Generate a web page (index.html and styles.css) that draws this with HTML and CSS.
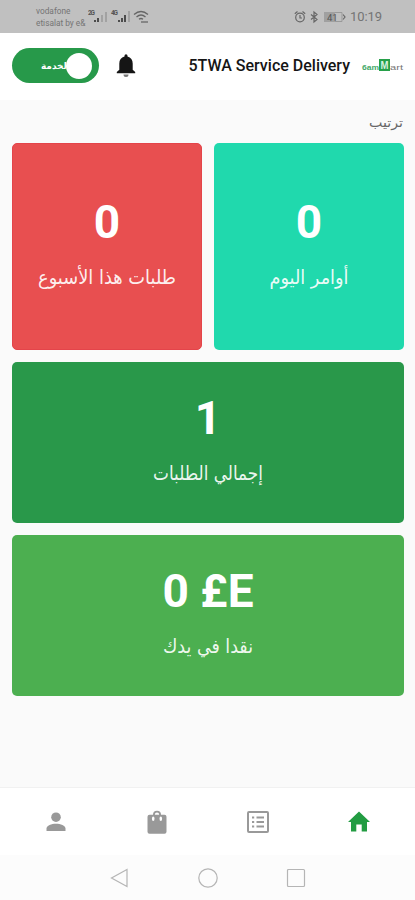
FILE: index.html
```html
<!DOCTYPE html>
<html lang="ar">
<head>
<meta charset="utf-8">
<title>5TWA Service Delivery</title>
<link rel="stylesheet" href="styles.css">
</head>
<body>
<div class="screen">
  <div class="status">
    <div class="carriers"><span>vodafone</span><span>etisalat by e&amp;</span></div>
    <svg class="signals" width="64" height="16" viewBox="0 0 64 16">
      <g font-family="Roboto, sans-serif" font-size="6.5" font-weight="700" fill="#555"><text x="0" y="6" textLength="7">2G</text><text x="23" y="6" textLength="7">4G</text></g>
      <g fill="#4c4c4c"><path d="M6 11h2v2H6zM9 9h2v4H9zM30 11h2v2h-2zM33 9h2v4h-2zM36 6h2v7h-2z"/></g>
      <g fill="#a2a2a2"><path d="M13 6h2v7h-2zM17 3h2v10h-2zM40 2h2v11h-2z"/></g>
      <g fill="none" stroke="#666" stroke-width="1.3"><path d="M46 5.500q7-6 14 0M48.500 8q4.500-4 9 0M51 10.300q2-1.600 4 0"/><path d="M53 13h7"/></g>
    </svg>
    <svg class="state" width="52" height="14" viewBox="0 0 52 14">
      <g fill="none" stroke="#666" stroke-width="1.200"><circle cx="6" cy="7.500" r="4.300"/><path d="M6 5v3h2M.8 3.700L3.500 1.500M11.200 3.700L8.500 1.500M17 4.500l6 5-3 2.500V2l3 2.500-6 5"/><path d="M49 4.500l2 2.500-2 2.500"/></g>
      <rect x="30" y="2" width="11" height="10" fill="#a0a0a0"/><path d="M41 2.500h7v9h-7" fill="none" stroke="#999"/>
      <text x="33" y="10.500" font-family="Roboto, sans-serif" font-size="9.500" fill="#555">41</text>
    </svg>
    <span class="clock">10:19</span>
  </div>
  <header class="appbar">
    <div class="toggle"><span class="toggle-text" dir="rtl">لخدمة</span><span class="knob"></span></div>
    <svg class="bell" width="20" height="24" viewBox="0 0 20 24"><path fill="#151515" d="M8.500 2.500V1.700a1.500 1.500 0 0 1 3 0v.8c3.400.8 5.200 3.500 5.200 7v6.300l2.500 2.300v1.100H.8v-1.100l2.500-2.300V9.500c0-3.500 1.800-6.200 5.200-7z"/><path fill="#777" d="M7.500 20.500h5a2.500 2.500 0 0 1-5 0z"/></svg>
    <h1>5TWA Service Delivery</h1>
    <svg class="logo" width="43" height="16" viewBox="0 0 43 16"><rect x="18" y="1" width="11" height="12" fill="#27a04a"/><g font-family="Liberation Sans, sans-serif" font-weight="700"><text x="1" y="12" font-size="7.500" textLength="17" lengthAdjust="spacingAndGlyphs" fill="#45a969">6am</text><text x="19.500" y="11" font-size="10" textLength="8" lengthAdjust="spacingAndGlyphs" fill="#d9f2e0">M</text><text x="29" y="12" font-size="7.500" textLength="13" lengthAdjust="spacingAndGlyphs" fill="#777" font-weight="400">art</text></g></svg>
  </header>
  <main>
    <svg class="sort" width="36" height="31" viewBox="0 0 36 31"><text x="18" y="15" textLength="34" lengthAdjust="spacingAndGlyphs">ترتيب</text></svg>
    <div class="cards">
      <section class="card red"><strong>0</strong><svg width="170" height="40" viewBox="0 0 170 40"><text x="85" y="25" textLength="138" lengthAdjust="spacingAndGlyphs">طلبات هذا الأسبوع</text></svg></section>
      <section class="card teal"><strong>0</strong><svg width="170" height="40" viewBox="0 0 170 40"><text x="85" y="25" textLength="79" lengthAdjust="spacingAndGlyphs">أوامر اليوم</text></svg></section>
      <section class="card wide green"><strong>1</strong><svg width="170" height="40" viewBox="0 0 170 40"><text x="85" y="25" textLength="110" lengthAdjust="spacingAndGlyphs">إجمالي الطلبات</text></svg></section>
      <section class="card wide light"><strong>0 £E</strong><svg width="170" height="40" viewBox="0 0 170 40"><text x="85" y="25" textLength="90" lengthAdjust="spacingAndGlyphs">نقدا في يدك</text></svg></section>
    </div>
  </main>
  <nav class="tabs">
    <svg viewBox="0 0 24 24"><circle cx="12" cy="7.200" r="4.800"/><path d="M2.500 21v-2.500c0-2.800 5-4.700 9.500-4.700s9.500 1.900 9.500 4.700V21z"/></svg>
    <svg viewBox="0 0 24 24"><path fill-rule="evenodd" d="M4.500 4.800H8a4 4 0 0 1 8 0h3.500A2 2 0 0 1 21.500 6.800v15a2 2 0 0 1-2 2h-15a2 2 0 0 1-2-2v-15a2 2 0 0 1 2-2zm5.300 0h4.400a2.200 2.200 0 0 0-4.400 0z"/><g fill="#fff"><ellipse cx="8.200" cy="8.700" rx="1.300" ry="2.200"/><ellipse cx="15.800" cy="8.700" rx="1.300" ry="2.200"/></g></svg>
    <svg viewBox="0 0 24 24"><rect x="2" y="2" width="20" height="20" rx="1" fill="none" stroke="#999" stroke-width="2"/><path d="M6 6.500h2.200v2H6zM10.500 6.500H18v2h-7.500zM6 11h2.200v2H6zM10.500 11H18v2h-7.500zM6 15.500h2.200v2H6zM10.500 15.500H18v2h-7.500z"/></svg>
    <svg class="active" viewBox="0 0 24 24"><path d="M12 1.500L23 12h-3v9.500h-5.300v-7H9.300v7H4V12H1z"/></svg>
  </nav>
  <div class="system">
    <svg viewBox="0 0 20 20"><path d="M17 1.500v17L1.500 10z"/></svg>
    <svg viewBox="0 0 20 20"><circle cx="10" cy="10" r="9.200"/></svg>
    <svg viewBox="0 0 20 20"><rect x="1.500" y="1.500" width="17" height="17" rx="1"/></svg>
  </div>
</div>
</body>
</html>
```
FILE: styles.css
```css
* { box-sizing: border-box; }
body { margin: 0; font-family: Roboto, "DejaVu Sans", sans-serif; }
svg { display: block; flex: none; }
.screen { width: 415px; height: 900px; display: flex; flex-direction: column; background: #fafafa; overflow: hidden; }
.status { height: 33px; background: #c0c0c0; display: flex; align-items: center; padding: 0 33px 0 36px; color: #747474; }
.carriers { display: flex; flex-direction: column; width: 52px; font-size: 8.3px; line-height: 12px; white-space: nowrap; margin-top: 1px; }
.state { margin-left: auto; }
.clock { font-size: 13px; width: 32px; margin-left: 4px; letter-spacing: -0.1px; }
.appbar { height: 67px; background: #fff; display: flex; align-items: center; padding: 0 11px 2px 12px; }
.toggle { width: 87px; height: 35px; border-radius: 18px; background: #27994a; display: flex; align-items: center; justify-content: flex-end; padding-right: 7px; }
.toggle-text { color: #fff; font: 700 9px "DejaVu Sans", sans-serif; white-space: nowrap; margin-right: -1px; }
.knob { width: 26px; height: 26px; border-radius: 50%; background: #fff; }
.bell { margin-left: 17px; }
h1 { margin: 0 11px 0 auto; font-size: 16px; line-height: 20px; font-weight: 500; color: #151515; white-space: nowrap; }
main { flex: 1; padding: 12px 11px 0 12px; }
.sort { margin-left: auto; }
.sort text { font: 13px "DejaVu Sans", sans-serif; fill: #666; text-anchor: middle; }
.cards { display: grid; grid-template-columns: 190px 190px; grid-template-rows: 207px 161px 161px; gap: 12px; }
.card { border-radius: 5px; display: flex; flex-direction: column; align-items: center; justify-content: center; color: #fff; }
.wide { grid-column: 1 / -1; }
.card strong { font-size: 46px; line-height: 54px; font-weight: 700; margin-bottom: 10px; }
.card text { font-family: "DejaVu Sans", sans-serif; font-size: 19.5px; fill: #fff; fill-opacity: .92; text-anchor: middle; }
.red { background: #e84f50; border: 1px solid #e4444a; }
.teal { background: #20d9ad; }
.green { background: #29984a; }
.light { background: #4caf50; }
.tabs { height: 68px; background: #fff; border-top: 1px solid #f1f1f1; display: grid; grid-template-columns: repeat(4, 100.8px); padding-left: 6px; align-items: center; justify-items: center; }
.tabs svg { width: 24px; height: 24px; fill: #999; }
.tabs .active { fill: #229c42; }
.system { height: 45px; background: #fcfcfc; display: flex; justify-content: center; align-items: center; gap: 68px; }
.system svg { width: 20px; height: 20px; fill: none; stroke: #b5b5b5; stroke-width: 1.2; }
```
